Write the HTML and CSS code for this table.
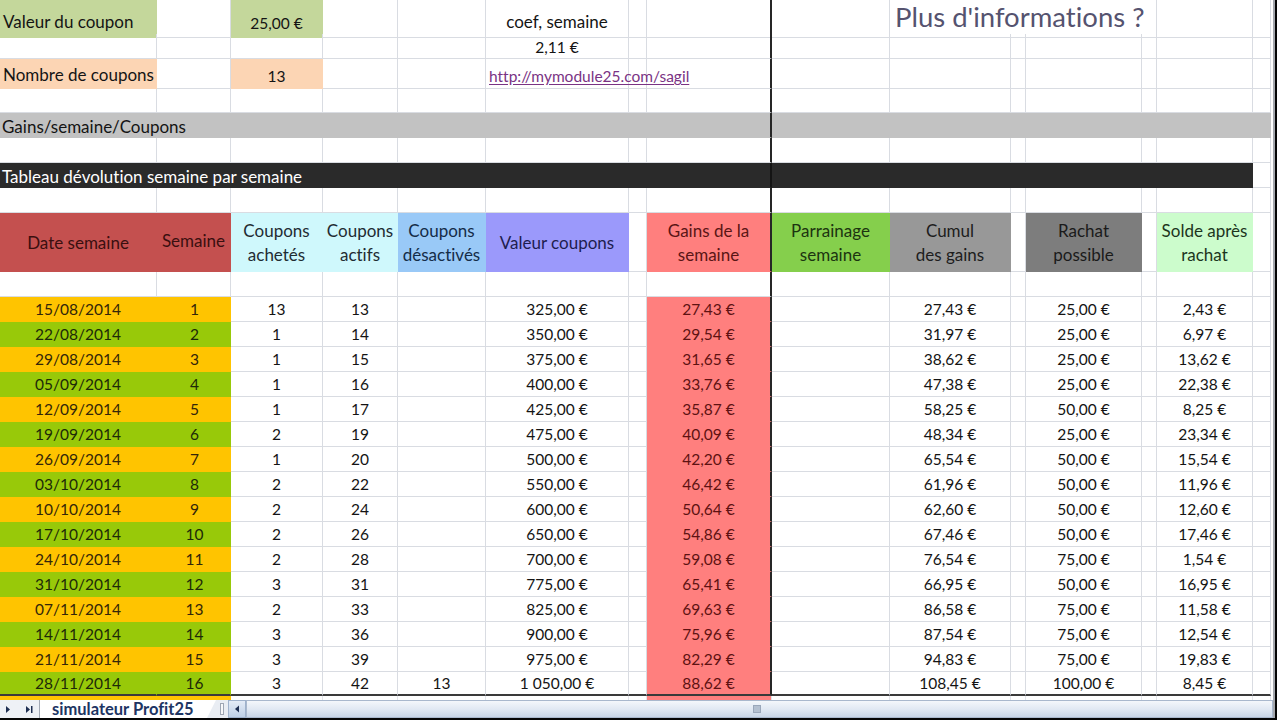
FILE: index.html
```html
<!DOCTYPE html>
<html lang="fr">
<head>
<meta charset="utf-8">
<title>simulateur Profit25</title>
<link rel="stylesheet" href="styles.css">
</head>
<body>
<div class="screen">
  <div class="sheet">
    <div class="row r1">
      <div class="l top-green">Valeur du coupon</div><div></div><div class="top-green n">25,00 €</div><div></div><div></div><div>coef, semaine</div><div></div><div></div><div></div><div class="info">Plus d'informations ?</div><div></div><div></div>
    </div>
    <div class="row r2">
      <div></div><div></div><div></div><div></div><div></div><div class="n">2,11 €</div><div></div><div></div><div></div><div></div><div></div><div></div><div></div><div></div><div></div>
    </div>
    <div class="row r3">
      <div class="l top-peach">Nombre de coupons</div><div></div><div class="top-peach n">13</div><div></div><div></div><div class="l link-cell"><a class="link" href="#">http://mymodule25.com/sagil</a></div><div></div><div></div><div></div><div></div><div></div><div></div><div></div><div></div><div></div>
    </div>
    <div class="row r4">
      <div></div><div></div><div></div><div></div><div></div><div></div><div></div><div></div><div></div><div></div><div></div><div></div><div></div><div></div><div></div>
    </div>
    <div class="row band-gray">
      <div class="l left-span">Gains/semaine/Coupons</div><div class="right-span"></div>
    </div>
    <div class="row">
      <div></div><div></div><div></div><div></div><div></div><div></div><div></div><div></div><div></div><div></div><div></div><div></div><div></div><div></div><div></div>
    </div>
    <div class="row band-black">
      <div class="l left-span">Tableau dévolution semaine par semaine</div><div class="right-span-black"></div><div></div>
    </div>
    <div class="row">
      <div></div><div></div><div></div><div></div><div></div><div></div><div></div><div></div><div></div><div></div><div></div><div></div><div></div><div></div><div></div>
    </div>
    <div class="row head">
      <div class="h-red">Date semaine</div>
      <div class="h-red sem">Semaine</div>
      <div class="h-cyan">Coupons<br>achetés</div>
      <div class="h-cyan">Coupons<br>actifs</div>
      <div class="h-blue">Coupons<br>désactivés</div>
      <div class="h-purple">Valeur coupons</div>
      <div></div>
      <div class="h-salmon">Gains de la<br>semaine</div>
      <div class="h-green">Parrainage<br>semaine</div>
      <div class="h-gray">Cumul<br>des gains</div>
      <div></div>
      <div class="h-dgray">Rachat<br>possible</div>
      <div></div>
      <div class="h-lgreen">Solde après<br>rachat</div>
      <div></div>
    </div>
    <div class="row">
      <div></div><div></div><div></div><div></div><div></div><div></div><div></div><div></div><div></div><div></div><div></div><div></div><div></div><div></div><div></div>
    </div>

    <div class="row data o"><div>15/08/2014</div><div>1</div><div>13</div><div>13</div><div></div><div>325,00 €</div><div></div><div>27,43 €</div><div></div><div>27,43 €</div><div></div><div>25,00 €</div><div></div><div>2,43 €</div><div></div></div>
    <div class="row data e"><div>22/08/2014</div><div>2</div><div>1</div><div>14</div><div></div><div>350,00 €</div><div></div><div>29,54 €</div><div></div><div>31,97 €</div><div></div><div>25,00 €</div><div></div><div>6,97 €</div><div></div></div>
    <div class="row data o"><div>29/08/2014</div><div>3</div><div>1</div><div>15</div><div></div><div>375,00 €</div><div></div><div>31,65 €</div><div></div><div>38,62 €</div><div></div><div>25,00 €</div><div></div><div>13,62 €</div><div></div></div>
    <div class="row data e"><div>05/09/2014</div><div>4</div><div>1</div><div>16</div><div></div><div>400,00 €</div><div></div><div>33,76 €</div><div></div><div>47,38 €</div><div></div><div>25,00 €</div><div></div><div>22,38 €</div><div></div></div>
    <div class="row data o"><div>12/09/2014</div><div>5</div><div>1</div><div>17</div><div></div><div>425,00 €</div><div></div><div>35,87 €</div><div></div><div>58,25 €</div><div></div><div>50,00 €</div><div></div><div>8,25 €</div><div></div></div>
    <div class="row data e"><div>19/09/2014</div><div>6</div><div>2</div><div>19</div><div></div><div>475,00 €</div><div></div><div>40,09 €</div><div></div><div>48,34 €</div><div></div><div>25,00 €</div><div></div><div>23,34 €</div><div></div></div>
    <div class="row data o"><div>26/09/2014</div><div>7</div><div>1</div><div>20</div><div></div><div>500,00 €</div><div></div><div>42,20 €</div><div></div><div>65,54 €</div><div></div><div>50,00 €</div><div></div><div>15,54 €</div><div></div></div>
    <div class="row data e"><div>03/10/2014</div><div>8</div><div>2</div><div>22</div><div></div><div>550,00 €</div><div></div><div>46,42 €</div><div></div><div>61,96 €</div><div></div><div>50,00 €</div><div></div><div>11,96 €</div><div></div></div>
    <div class="row data o"><div>10/10/2014</div><div>9</div><div>2</div><div>24</div><div></div><div>600,00 €</div><div></div><div>50,64 €</div><div></div><div>62,60 €</div><div></div><div>50,00 €</div><div></div><div>12,60 €</div><div></div></div>
    <div class="row data e"><div>17/10/2014</div><div>10</div><div>2</div><div>26</div><div></div><div>650,00 €</div><div></div><div>54,86 €</div><div></div><div>67,46 €</div><div></div><div>50,00 €</div><div></div><div>17,46 €</div><div></div></div>
    <div class="row data o"><div>24/10/2014</div><div>11</div><div>2</div><div>28</div><div></div><div>700,00 €</div><div></div><div>59,08 €</div><div></div><div>76,54 €</div><div></div><div>75,00 €</div><div></div><div>1,54 €</div><div></div></div>
    <div class="row data e"><div>31/10/2014</div><div>12</div><div>3</div><div>31</div><div></div><div>775,00 €</div><div></div><div>65,41 €</div><div></div><div>66,95 €</div><div></div><div>50,00 €</div><div></div><div>16,95 €</div><div></div></div>
    <div class="row data o"><div>07/11/2014</div><div>13</div><div>2</div><div>33</div><div></div><div>825,00 €</div><div></div><div>69,63 €</div><div></div><div>86,58 €</div><div></div><div>75,00 €</div><div></div><div>11,58 €</div><div></div></div>
    <div class="row data e"><div>14/11/2014</div><div>14</div><div>3</div><div>36</div><div></div><div>900,00 €</div><div></div><div>75,96 €</div><div></div><div>87,54 €</div><div></div><div>75,00 €</div><div></div><div>12,54 €</div><div></div></div>
    <div class="row data o"><div>21/11/2014</div><div>15</div><div>3</div><div>39</div><div></div><div>975,00 €</div><div></div><div>82,29 €</div><div></div><div>94,83 €</div><div></div><div>75,00 €</div><div></div><div>19,83 €</div><div></div></div>
    <div class="row data e last"><div>28/11/2014</div><div>16</div><div>3</div><div>42</div><div>13</div><div>1 050,00 €</div><div></div><div>88,62 €</div><div></div><div>108,45 €</div><div></div><div>100,00 €</div><div></div><div>8,45 €</div><div></div></div>
    <div class="row data o partial"><div></div><div></div><div></div><div></div><div></div><div></div><div></div><div></div><div></div><div></div><div></div><div></div><div></div><div></div><div></div></div>
  </div>

  <div class="tabbar">
    <div class="nav">
      <svg width="34" height="17" viewBox="0 0 34 17" aria-hidden="true">
        <path d="M6 5 L10 8.5 L6 12 Z" fill="#1e2f52"/>
        <path d="M26 5 L30 8.5 L26 12 Z" fill="#1e2f52"/>
        <rect x="31" y="5" width="1.5" height="7" fill="#1e2f52"/>
      </svg>
    </div>
    <div class="tab">simulateur Profit25</div>
    <div class="split"><span></span></div>
    <div class="sbtn">
      <svg width="16" height="16" viewBox="0 0 16 16" aria-hidden="true">
        <path d="M10 4.5 L6 8 L10 11.5 Z" fill="#1e2f52"/>
      </svg>
    </div>
    <div class="thumb"><span class="grip"></span></div>
  </div>
</div>
</body>
</html>
```

FILE: styles.css
```css
* {
  box-sizing: border-box;
  margin: 0;
  padding: 0;
}

html,
body {
  background: #050505;
}

body {
  width: 1277px;
  height: 720px;
  overflow: hidden;
  font-family: Lato, "Open Sans", sans-serif;
  font-size: 17px;
  font-variant-ligatures: none;
  color: #141414;
}

.screen {
  width: 1277px;
  display: flex;
  flex-direction: column;
}

.sheet {
  width: 1275px;
  background: #fff;
  border-right: 2px solid #a5a8ae;
}

.row {
  display: grid;
  grid-template-columns: 157px 74px 92px 75px 88px 143px 18px 125px 118px 121px 15px 116px 15px 96px 18px;
  height: 25px;
}

.row > div {
  border-right: 1px solid #d9dce2;
  border-bottom: 1px solid #d9dce2;
  display: flex;
  align-items: center;
  justify-content: center;
  white-space: nowrap;
  text-align: center;
}

.row > div:nth-child(8) {
  border-right: 2px solid #262626;
}

.row > .l {
  justify-content: flex-start;
  padding-left: 3px;
}

.row > .n {
  font-size: 15.5px;
}

/* top block */
.r1 {
  height: 34px;
}

.r1 > div {
  align-items: flex-end;
  padding-bottom: 5px;
}

.r2 > div {
  padding-top: 1px;
}

.r3 {
  height: 30px;
}

.r3 > div {
  align-items: flex-end;
  padding-bottom: 3px;
}

.r4 {
  height: 24px;
}

.row > .top-green {
  background: #c4d79b;
  border-color: #c4d79b;
}

.row > .top-peach {
  background: #fcd5b4;
  border-color: #fcd5b4;
}

.row > .info {
  grid-column: 10 / span 4;
  justify-content: flex-start;
  padding-left: 5px;
  padding-bottom: 4px;
  font-size: 27.5px;
  color: #55536f;
}

.row > .link-cell {
  position: relative;
  z-index: 1;
  font-size: 15.5px;
}

.link {
  color: #7a3384;
  text-decoration: underline;
  text-underline-offset: 2px;
}

/* bands */
.band-gray > .left-span {
  grid-column: 1 / span 8;
  background: #c2c2c2;
  border-color: #c2c2c2;
  border-right: 2px solid #262626;
  padding-left: 2px;
  padding-top: 2px;
}

.band-gray > .right-span {
  grid-column: 9 / span 7;
  background: #c2c2c2;
  border-color: #c2c2c2;
}

.band-black > .left-span {
  grid-column: 1 / span 8;
  background: #2a2a2a;
  border-color: #2a2a2a;
  border-right: 2px solid #141414;
  color: #ffffff;
  padding-left: 2px;
  padding-top: 3px;
}

.band-black > .right-span-black {
  grid-column: 9 / span 6;
  background: #2a2a2a;
  border-color: #2a2a2a;
}

/* header row */
.head {
  height: 59px;
  line-height: 24px;
}

.head > div {
  padding-top: 1px;
}

.head > .sem {
  padding-top: 0;
  padding-bottom: 2px;
}

.row > .h-red {
  background: #c4504f;
  border-color: #c4504f;
  color: #3a0f0f;
}

.row > .h-cyan {
  background: #cff8fc;
  border-color: #cff8fc;
  color: #1f2c33;
}

.row > .h-blue {
  background: #99c9f7;
  border-color: #99c9f7;
  color: #142c48;
}

.row > .h-purple {
  background: #9b99fb;
  border-color: #9b99fb;
  color: #1e1d4f;
}

.row > .h-salmon {
  background: #ff7f7e;
  border-bottom-color: #ff7f7e;
  color: #5a1515;
}

.row > .h-green {
  background: #85cf4c;
  border-color: #85cf4c;
  color: #1c3410;
}

.row > .h-gray {
  background: #989898;
  border-color: #989898;
  color: #1d1d1d;
}

.row > .h-dgray {
  background: #7d7d7d;
  border-color: #7d7d7d;
  color: #1a1a1a;
}

.row > .h-lgreen {
  background: #ccfccc;
  border-color: #ccfccc;
  color: #1c351c;
}

/* data rows */
.data {
  font-size: 15.5px;
}

.data > div:nth-child(-n+2) {
  border-color: transparent;
}

.o > div:nth-child(-n+2) {
  background: #ffc400;
  color: #33260a;
}

.e > div:nth-child(-n+2) {
  background: #98c909;
  color: #1d2a08;
}

.data > div:nth-child(8) {
  background: #ff7f7e;
  border-bottom-color: #ff7f7e;
  color: #5e1212;
}

.data > div:nth-child(2) {
  padding-left: 2px;
}

.last {
  height: 24px;
}

.last > div,
.last > div:nth-child(-n+2),
.last > div:nth-child(8) {
  border-bottom: 2px solid #3a3a3a;
}

.partial {
  height: 4px;
}

.partial > div,
.partial > div:nth-child(8) {
  border-bottom: none;
  border-right: 1px solid #e3e5ea;
}

/* sheet tabs + scroll bar */
.tabbar {
  height: 18px;
  width: 1275px;
  display: flex;
  align-items: stretch;
  background: #e9edf3;
  border-right: 2px solid #a5a8ae;
}

.nav {
  width: 40px;
  display: flex;
  align-items: center;
  background: #eef1f6;
  border-right: 1px solid #a3aab6;
}

.tab {
  width: 176px;
  display: flex;
  align-items: center;
  padding-left: 12px;
  background: #ffffff;
  color: #1d3563;
  font-weight: 700;
  font-size: 16.5px;
  clip-path: polygon(0 0, 100% 0, calc(100% - 9px) 100%, 0 100%);
}

.split {
  width: 12px;
  display: flex;
  align-items: center;
  justify-content: center;
}

.split span {
  width: 4px;
  height: 12px;
  border: 1px solid #9ea6b3;
  background: #f7f8fa;
}

.sbtn {
  width: 18px;
  display: flex;
  align-items: center;
  justify-content: center;
  background: linear-gradient(#e4ecf7, #bfd0e6);
  border: 1px solid #9fb2cc;
}

.thumb {
  flex: 1;
  display: flex;
  align-items: center;
  justify-content: center;
  padding-right: 6px;
  background: linear-gradient(#f4f7fb, #dfe7f2 55%, #c8d5e7);
  border: 1px solid #a9b8cd;
}

.grip {
  width: 8px;
  height: 8px;
  background: #b4c0d0;
  border: 1px solid #9aa7ba;
}
```
